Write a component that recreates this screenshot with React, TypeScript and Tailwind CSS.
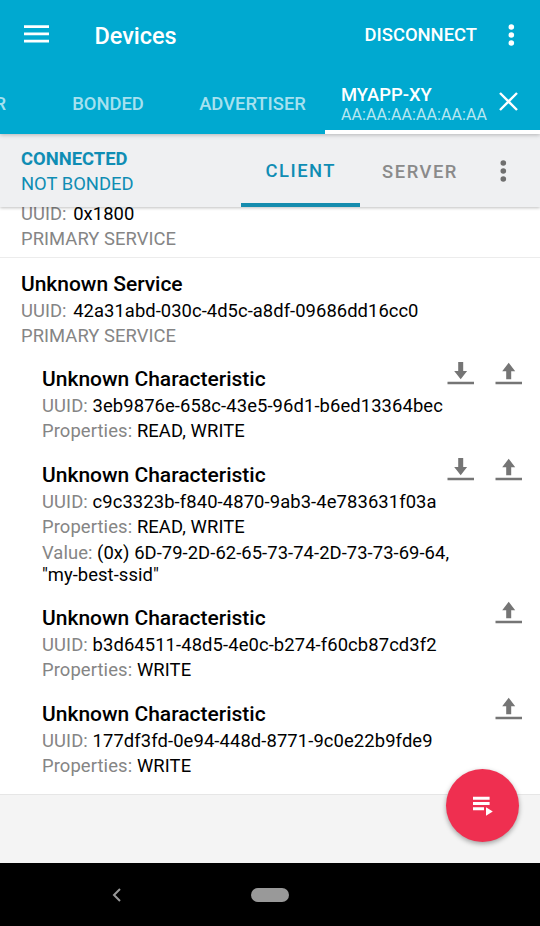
type Characteristic = {
  uuid: string;
  properties: string;
  value?: string[];
  readable?: boolean;
};

const characteristics: Characteristic[] = [
  { uuid: "3eb9876e-658c-43e5-96d1-b6ed13364bec", properties: "READ, WRITE", readable: true },
  {
    uuid: "c9c3323b-f840-4870-9ab3-4e783631f03a",
    properties: "READ, WRITE",
    value: ["(0x) 6D-79-2D-62-65-73-74-2D-73-73-69-64,", '"my-best-ssid"'],
    readable: true,
  },
  { uuid: "b3d64511-48d5-4e0c-b274-f60cb87cd3f2", properties: "WRITE" },
  { uuid: "177df3fd-0e94-448d-8771-9c0e22b9fde9", properties: "WRITE" },
];

function Dots({ className }: { className: string }) {
  return (
    <svg className={className} width="8" height="24" viewBox="0 0 8 24" fill="currentColor">
      <circle cx="4.3" cy="4" r="2.8" />
      <circle cx="4.3" cy="12" r="2.8" />
      <circle cx="4.3" cy="20" r="2.8" />
    </svg>
  );
}

function ReadIcon() {
  return (
    <svg width="27" height="23" viewBox="0 0 27 23" fill="#757575">
      <path d="M11.200 0h5v9.100h3.900L13.700 17.300 7.200 9.100h4zM.5 19.700H27v2.500H.5z" />
    </svg>
  );
}

function WriteIcon() {
  return (
    <svg width="27" height="23" viewBox="0 0 27 23" fill="#757575">
      <path d="M13.700 .7l6.500 8.500h-4v8.100h-5V9.200H7.200zM.5 19.700H27v2.500H.5z" />
    </svg>
  );
}

function CharacteristicRow({ item }: { item: Characteristic }) {
  return (
    <div className="flex pr-[18px] pb-5 pl-[42px]">
      <div className="min-w-0 flex-1 whitespace-nowrap">
        <div className="h-[25px] pt-px text-[21px] leading-[25px] font-medium tracking-normal">Unknown Characteristic</div>
        <div className="mt-1 h-[22px] leading-[22px]">
          <span className="text-[#858585]">UUID:</span> {item.uuid}
        </div>
        <div className="mt-[3px] h-[22px] leading-[22px]">
          <span className="text-[#858585]">Properties:</span> {item.properties}
        </div>
        {item.value && (
          <div className="mt-[3px] h-11 leading-[22px]">
            <div className="pt-px tracking-[0.06px]">
              <span className="text-[#858585]">Value:</span> {item.value[0]}
            </div>
            <div className="h-[21px] leading-[21px] tracking-[0.06px]">{item.value[1]}</div>
          </div>
        )}
      </div>
      <div className="-mt-1 flex h-[23px] shrink-0 gap-[21px]">
        {item.readable && <ReadIcon />}
        <WriteIcon />
      </div>
    </div>
  );
}

export default function App() {
  return (
    <div className="flex h-[926px] w-[540px] flex-col overflow-hidden bg-[#f4f4f4] font-['Roboto',sans-serif] text-[18.4px] font-normal tracking-[0.1px] text-black">
      <header className="relative z-20 flex h-[134px] shrink-0 flex-col bg-[#00a9d0] text-white shadow-[0_1px_4px_rgba(0,0,0,0.25)]">
        <div className="flex h-[70px] items-center pr-[25px] pl-6">
          <svg width="25" height="20" viewBox="0 0 25 20" fill="white">
            <path d="M0 .3h25v2.800H0zM0 7.500h25v2.800H0zM0 14.700h25v2.800H0z" />
          </svg>
          <h1 className="ml-[45.500px] pt-[3px] text-[23.500px] font-medium tracking-[-0.03px]">Devices</h1>
          <span className="ml-auto font-medium tracking-normal">DISCONNECT</span>
          <Dots className="-mt-px ml-[30px]" />
        </div>
        <nav className="flex h-16 font-medium tracking-normal whitespace-nowrap">
          <span className="flex w-[6px] items-center justify-end overflow-hidden pt-[3px] text-[#a6e1ef]">R</span>
          <span className="flex w-[204px] items-center justify-center pt-[3px] text-[#a6e1ef]">BONDED</span>
          <span className="-ml-[20px] flex w-[125px] items-center justify-center pt-[3px] text-[#a6e1ef]">ADVERTISER</span>
          <div className="ml-auto flex w-[215px] items-center border-b-4 border-white pt-[3px] pl-4">
            <div className="pt-[5px]">
              <div className="h-5 leading-5">MYAPP-XY</div>
              <div className="h-[18px] text-[16px] leading-[19px] font-normal tracking-[0.08px] text-[#b9e8f2]">AA:AA:AA:AA:AA:AA</div>
            </div>
            <svg className="mr-[22px] ml-auto" width="19" height="19" viewBox="0 0 19 19" stroke="white" strokeWidth="2.400">
              <path d="M1 1l17 17M18 1L1 18" />
            </svg>
          </div>
        </nav>
      </header>

      <div className="relative z-10 flex h-[73px] shrink-0 bg-[#eff0f2] text-[#0f8db4] shadow-[0_1px_3px_rgba(0,0,0,0.25)]">
        <div className="w-[240.500px] pt-3 pl-[21px] leading-[26px]">
          <div className="font-bold tracking-normal">CONNECTED</div>
          <div className="-mt-px tracking-normal">NOT BONDED</div>
        </div>
        <div className="flex w-[119.500px] items-center justify-center border-b-4 border-[#158cae] pt-[5px] pl-px font-medium tracking-[1.500px]">CLIENT</div>
        <div className="flex w-[120px] items-center justify-center pt-[2px] font-medium tracking-[1.500px] text-[#8a8a8a]">SERVER</div>
        <Dots className="mt-[25px] ml-[19px] text-[#6f6f6f]" />
      </div>

      <main className="h-[588px] shrink-0 overflow-hidden border-b border-[#e6e6e6] bg-white">
        <section className="-mt-1 h-[55px] border-b border-[#ececec] pl-[21px] leading-[22px] tracking-[0.05px]">
          <div><span className="mr-[2px] text-[#858585]">UUID:</span> 0x1800</div>
          <div className="mt-[3px] text-[#858585]">PRIMARY SERVICE</div>
        </section>
        <section className="pt-[13px]">
          <div className="h-[95px] pl-[21px] leading-[22px] tracking-[0.05px]">
            <div className="h-[25px] pt-px text-[21px] leading-[25px] font-medium tracking-[-0.03px]">Unknown Service</div>
            <div className="mt-1"><span className="mr-[2px] text-[#858585]">UUID:</span> 42a31abd-030c-4d5c-a8df-09686dd16cc0</div>
            <div className="mt-[3px] text-[#858585]">PRIMARY SERVICE</div>
          </div>
          {characteristics.map((item) => <CharacteristicRow key={item.uuid} item={item} />)}
        </section>
      </main>

      <div className="relative h-[68px] shrink-0">
        <button className="absolute -top-[26px] left-[446px] flex h-[73px] w-[73px] items-center justify-center rounded-full bg-[#ef2f50] shadow-[0_2px_5px_rgba(0,0,0,0.35)]">
          <svg width="20" height="20" viewBox="0 0 20 20" fill="white">
            <path d="M0 .7h16.600v3H0zM0 6h16.600v3H0zM0 11.300h11v3H0zM13 11.300l6.800 4.200L13 19.700z" />
          </svg>
        </button>
      </div>

      <footer className="flex h-[63px] shrink-0 items-center bg-black">
        <svg className="ml-[112px]" width="9" height="14" viewBox="0 0 9 14" fill="none" stroke="#999" strokeWidth="2">
          <path d="M8 1L2 7l6 6" />
        </svg>
        <div className="ml-[130px] h-[14px] w-[38px] rounded-full bg-[#999]" />
      </footer>
    </div>
  );
}
